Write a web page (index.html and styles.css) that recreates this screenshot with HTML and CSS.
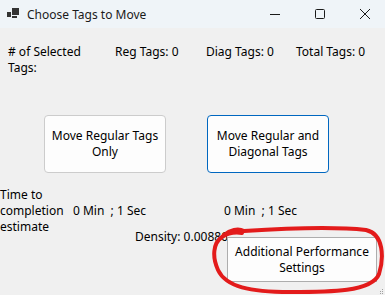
FILE: index.html
```html
<!DOCTYPE html>
<html>
<head>
    <meta charset="UTF-8">
    <title>Choose Tags to Move</title>
    <link rel="stylesheet" href="styles.css">
</head>
<body>
    <div id="window">
        <div class="titlebar">
            <svg class="app-icon" width="13" height="11" viewBox="0 0 13 11">
                <rect x="5" y="0" width="7" height="7" fill="#333"/>
                <rect x="0" y="4" width="4" height="5" fill="#333"/>
                <rect x="5" y="8" width="5" height="2" fill="#333"/>
            </svg>
            <span class="title">Choose Tags to Move</span>
            <div class="controls">
                <svg width="10" height="10" viewBox="0 0 10 10"><path d="M0 5.5h10" stroke="#1a1a1a" fill="none"/></svg>
                <svg width="10" height="10" viewBox="0 0 10 10"><rect x="0.5" y="0.5" width="9" height="9" rx="1" stroke="#1a1a1a" fill="none"/></svg>
                <svg width="10" height="10" viewBox="0 0 10 10"><path d="M0 0L10 10M10 0L0 10" stroke="#1a1a1a" fill="none"/></svg>
            </div>
        </div>

        <div class="content">
            <div class="stats">
                <div class="stat-label">
                    <span class="wrap">
                        # of Selected Tags:
                    </span>
                </div>
                <div class="stat reg">Reg Tags: 0</div>
                <div class="stat diag">Diag Tags: 0</div>
                <div class="stat total">Total Tags: 0</div>
            </div>

            <div class="actions">
                <button class="move-btn">Move Regular Tags Only</button>
                <button class="move-btn focused">Move Regular and Diagonal Tags</button>
            </div>

            <div class="timing">
                <div class="time-label">Time to completion estimate</div>
                <div class="time-values">
                    <div class="times">
                        <span class="time first">0 Min  ; 1 Sec</span>
                        <span class="time">0 Min  ; 1 Sec</span>
                    </div>
                    <div class="density-row">
                        <span class="density">Density: 0.008865</span>
                        <button class="perf-btn">Additional Performance Settings</button>
                    </div>
                </div>
            </div>
        </div>

        <svg class="grip" width="5" height="5" viewBox="0 0 5 5">
            <rect x="3" y="0" width="1" height="1" fill="#a0a0a0"/>
            <rect x="1" y="2" width="1" height="1" fill="#a0a0a0"/>
            <rect x="3" y="2" width="1" height="1" fill="#a0a0a0"/>
            <rect x="1" y="4" width="1" height="1" fill="#a0a0a0"/>
            <rect x="3" y="4" width="1" height="1" fill="#a0a0a0"/>
        </svg>

        <!-- hand drawn highlight around the settings button -->
        <svg class="highlight" width="385" height="295" viewBox="0 0 385 295">
            <path d="M224 235 C230 230 238 228 244 231 C275 229 330 226 366 230 C384 234 384 258 379 274 C372 292 330 292 290 292 C250 292 226 287 218 270 C212 257 213 243 222 237 C228 233 236 232 242 233"
                  stroke="#e31b1b" stroke-width="4" fill="none" stroke-linecap="round" stroke-linejoin="round"/>
        </svg>
    </div>
</body>
</html>
```

FILE: styles.css
```css
body {
    margin: 0;
    font-family: "Segoe UI", "Noto Sans", sans-serif;
    font-size: 12px;
    color: #000;
}

#window {
    position: relative;
    width: 385px;
    height: 295px;
    overflow: hidden;
    background: #f0f0f0;
}

.titlebar {
    display: flex;
    align-items: center;
    height: 28px;
    background: #eff4f8;
}

.app-icon {
    margin-left: 7px;
    margin-bottom: 1px;
}

.title {
    margin-left: 7px;
    color: #1a1a1a;
}

.controls {
    display: flex;
    gap: 35px;
    margin-left: auto;
    margin-right: 15px;
}

.stats {
    display: flex;
    margin-top: 16px;
    line-height: 16px;
}

.stat-label {
    width: 115px;
    padding-left: 8px;
    box-sizing: border-box;
}

.wrap {
    display: block;
    width: 80px;
}

.reg {
    width: 91px;
}

.diag {
    width: 90px;
}

.actions {
    display: flex;
    gap: 41px;
    margin-top: 39px;
    padding-left: 44px;
}

button {
    font-family: inherit;
    font-size: 12px;
    line-height: 16px;
    color: #000;
    background: #fdfdfd;
    border: 1px solid #cccccc;
    border-radius: 4px;
    padding: 0 1px;
}

.move-btn {
    width: 122px;
    height: 58px;
}

.move-btn.focused {
    border-color: #0067c0;
}

.timing {
    display: flex;
    margin-top: 14px;
    line-height: 16px;
}

.time-label {
    width: 73px;
    padding-right: 3px;
    box-sizing: border-box;
}

.times {
    display: flex;
    margin-top: 16px;
}

.time {
    white-space: pre;
}

.time.first {
    width: 151px;
}

.density-row {
    display: flex;
    align-items: flex-start;
    margin-top: 10px;
    padding-left: 62px;
}

.density {
    width: 92px;
    overflow: hidden;
    white-space: nowrap;
}

.perf-btn {
    width: 150px;
    height: 45px;
    margin-top: 8px;
    border-color: #adadad;
    border-radius: 0;
}

.grip {
    position: absolute;
    right: 1px;
    bottom: 1px;
}

.highlight {
    position: absolute;
    left: 0;
    top: 0;
    pointer-events: none;
}
```
